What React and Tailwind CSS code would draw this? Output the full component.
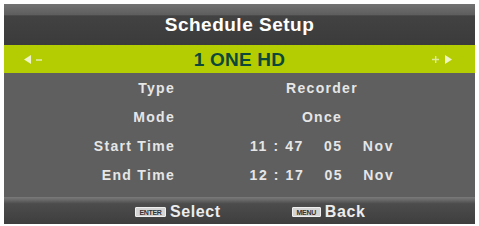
export default function App() {
  const font = { fontFamily: '"Liberation Sans", Arial, sans-serif' };
  const rows = [
    ["Type", <span>Recorder</span>],
    ["Mode", <span>Once</span>],
    [
      "Start Time",
      <span className="flex gap-[20px] tracking-[1.6px]">
        <span>11 : 47</span>
        <span>05</span>
        <span>Nov</span>
      </span>,
    ],
    [
      "End Time",
      <span className="flex gap-[20px] tracking-[1.6px]">
        <span>12 : 17</span>
        <span>05</span>
        <span>Nov</span>
      </span>,
    ],
  ];
  return (
    <div className="w-[479px] h-[226px] bg-white pt-[4px] pl-[4px]" style={font}>
      <div className="w-[471px] h-[220px] flex flex-col bg-[#5f5f5f] font-bold">
        {/* header */}
        <div className="h-[41px] flex items-center justify-center bg-[linear-gradient(to_bottom,#727272_0%,#5e5e5e_26%,#424242_29%,#3b3b3b_100%)]">
          <span className="text-[19px] text-white tracking-[0.5px] leading-none">
            Schedule Setup
          </span>
        </div>
        {/* channel bar */}
        <div className="h-[28px] flex items-center bg-[#b4cc02] relative">
          <div className="absolute left-[20px] top-[10px] flex items-center gap-[5px]">
            <svg width="7" height="9" viewBox="0 0 7 9">
              <path d="M7 0 L0 4.5 L7 9 Z" fill="#eef4c8" />
            </svg>
            <span className="w-[6px] h-[2px] bg-[#d8e488]" />
          </div>
          <div className="absolute left-[428px] top-[10px] flex items-center gap-[6px]">
            <svg width="7" height="7" viewBox="0 0 7 7">
              <path d="M3 0h1.4v7H3z M0 2.8h7v1.4H0z" fill="#dfe99a" />
            </svg>
            <svg width="7" height="9" viewBox="0 0 7 9">
              <path d="M0 0 L7 4.5 L0 9 Z" fill="#eef4c8" />
            </svg>
          </div>
          <span className="w-full text-center text-[19px] leading-none text-[#0c473a] tracking-[0.2px]">
            1 ONE HD
          </span>
        </div>
        {/* content */}
        <div className="flex-1 grid grid-cols-[171px_294px] auto-rows-[29px] text-[14px] text-[#e6e6e6] tracking-[1.3px] leading-none">
          {rows.map(([label, value], i) => [
            <div key={"l" + i} className="flex items-center justify-end">
              {label}
            </div>,
            <div key={"v" + i} className="flex items-center justify-center">
              {value}
            </div>,
          ])}
        </div>
        {/* footer */}
        <div className="h-[27px] flex items-center bg-[linear-gradient(to_bottom,#7a7a7a_0%,#6a6a6a_10%,#4c4c4c_25%,#3e3e3e_100%)] pt-[3px] text-[16px] text-[#ececec] leading-none">
          <span className="ml-[131px] w-[31px] h-[10px] bg-[#d4d4d4] rounded-[1px] flex items-center justify-center text-[7px] text-[#333] tracking-[-0.3px] border border-[#eee]">
            ENTER
          </span>
          <span className="ml-[4px] tracking-[0.6px]">Select</span>
          <span className="ml-[71px] w-[29px] h-[10px] bg-[#d4d4d4] rounded-[1px] flex items-center justify-center text-[7px] text-[#333] tracking-[-0.3px] border border-[#eee]">
            MENU
          </span>
          <span className="ml-[4px] tracking-[0.6px]">Back</span>
        </div>
      </div>
    </div>
  );
}
